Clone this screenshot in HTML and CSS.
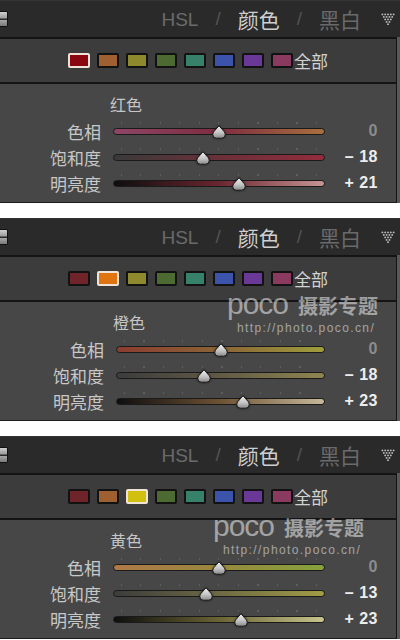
FILE: index.html
```html
<!DOCTYPE html>
<html lang="zh-CN">

<head>
    <meta charset="UTF-8">
    <meta name="viewport" content="width=device-width, initial-scale=1.0">
    <title>HSL / 颜色 / 黑白</title>
    <link rel="stylesheet" href="styles.css">
</head>

<body>
    <!-- shared shapes for the slider thumbs -->
    <svg class="svg-defs" aria-hidden="true">
        <defs>
            <linearGradient id="thumbFill" x1="0" y1="0" x2="0" y2="1">
                <stop offset="0" stop-color="#f2f2f2" />
                <stop offset="0.55" stop-color="#c4c4c4" />
                <stop offset="1" stop-color="#8a8a8a" />
            </linearGradient>
            <symbol id="thumbShape" viewBox="0 0 14 14">
                <path d="M7 0.8 L12 6.4 Q13.2 7.8 13.2 9.6 Q13.2 13.2 9.6 13.2 L4.4 13.2 Q0.8 13.2 0.8 9.6 Q0.8 7.8 2 6.4 Z"
                    fill="url(#thumbFill)" stroke="#1c1c1c" stroke-width="1" />
            </symbol>
            <symbol id="collapseIcon" viewBox="0 0 14 12">
                <g fill="#bdbdbd">
                    <circle cx="1.4" cy="1.4" r="0.95" /><circle cx="4.2" cy="1.4" r="0.95" /><circle cx="7" cy="1.4" r="0.95" /><circle cx="9.8" cy="1.4" r="0.95" /><circle cx="12.6" cy="1.4" r="0.95" />
                    <circle cx="2.8" cy="3.9" r="0.95" /><circle cx="5.6" cy="3.9" r="0.95" /><circle cx="8.4" cy="3.9" r="0.95" /><circle cx="11.2" cy="3.9" r="0.95" />
                    <circle cx="4.2" cy="6.4" r="0.95" /><circle cx="7" cy="6.4" r="0.95" /><circle cx="9.8" cy="6.4" r="0.95" />
                    <circle cx="5.6" cy="8.9" r="0.95" /><circle cx="8.4" cy="8.9" r="0.95" />
                    <circle cx="7" cy="11.2" r="0.95" />
                </g>
            </symbol>
        </defs>
    </svg>

    <!-- 红色 -->
    <div class="panel panel-red">
        <div class="panel-head">
            <span class="panel-toggle"></span>
            <div class="tabs">
                <span class="tab tab-latin">HSL</span>
                <span class="tab-sep">/</span>
                <span class="tab tab-active">颜色</span>
                <span class="tab-sep">/</span>
                <span class="tab">黑白</span>
                <svg class="collapse-icon"><use href="#collapseIcon" /></svg>
            </div>
        </div>
        <div class="swatches">
            <span class="swatch sw-red is-selected"></span>
            <span class="swatch sw-orange"></span>
            <span class="swatch sw-yellow"></span>
            <span class="swatch sw-green"></span>
            <span class="swatch sw-aqua"></span>
            <span class="swatch sw-blue"></span>
            <span class="swatch sw-purple"></span>
            <span class="swatch sw-magenta"></span>
            <span class="swatch-all">全部</span>
        </div>
        <div class="sliders">
            <div class="sliders-title">红色</div>
            <div class="slider-row">
                <span class="slider-label">色相</span>
                <div class="track-wrap">
                    <div class="track track-hue"></div>
                    <svg class="thumb" style="left: 50%"><use href="#thumbShape" /></svg>
                </div>
                <span class="slider-value is-zero">0</span>
            </div>
            <div class="slider-row">
                <span class="slider-label">饱和度</span>
                <div class="track-wrap">
                    <div class="track track-sat"></div>
                    <svg class="thumb" style="left: 42.5%"><use href="#thumbShape" /></svg>
                </div>
                <span class="slider-value">– 18</span>
            </div>
            <div class="slider-row">
                <span class="slider-label">明亮度</span>
                <div class="track-wrap">
                    <div class="track track-lum"></div>
                    <svg class="thumb" style="left: 59.5%"><use href="#thumbShape" /></svg>
                </div>
                <span class="slider-value">+ 21</span>
            </div>
        </div>
    </div>

    <!-- 橙色 -->
    <div class="panel panel-orange">
        <div class="panel-head">
            <span class="panel-toggle"></span>
            <div class="tabs">
                <span class="tab tab-latin">HSL</span>
                <span class="tab-sep">/</span>
                <span class="tab tab-active">颜色</span>
                <span class="tab-sep">/</span>
                <span class="tab">黑白</span>
                <svg class="collapse-icon"><use href="#collapseIcon" /></svg>
            </div>
        </div>
        <div class="swatches">
            <span class="swatch sw-red"></span>
            <span class="swatch sw-orange is-selected"></span>
            <span class="swatch sw-yellow"></span>
            <span class="swatch sw-green"></span>
            <span class="swatch sw-aqua"></span>
            <span class="swatch sw-blue"></span>
            <span class="swatch sw-purple"></span>
            <span class="swatch sw-magenta"></span>
            <span class="swatch-all">全部</span>
        </div>
        <div class="sliders">
            <div class="watermark">
                <div class="wm-head"><span class="wm-logo">poco</span><span class="wm-title">摄影专题</span></div>
                <div class="wm-url">http://photo.poco.cn/</div>
            </div>
            <div class="sliders-title">橙色</div>
            <div class="slider-row">
                <span class="slider-label">色相</span>
                <div class="track-wrap">
                    <div class="track track-hue"></div>
                    <svg class="thumb" style="left: 50%"><use href="#thumbShape" /></svg>
                </div>
                <span class="slider-value is-zero">0</span>
            </div>
            <div class="slider-row">
                <span class="slider-label">饱和度</span>
                <div class="track-wrap">
                    <div class="track track-sat"></div>
                    <svg class="thumb" style="left: 42%"><use href="#thumbShape" /></svg>
                </div>
                <span class="slider-value">– 18</span>
            </div>
            <div class="slider-row">
                <span class="slider-label">明亮度</span>
                <div class="track-wrap">
                    <div class="track track-lum"></div>
                    <svg class="thumb" style="left: 61%"><use href="#thumbShape" /></svg>
                </div>
                <span class="slider-value">+ 23</span>
            </div>
        </div>
    </div>

    <!-- 黄色 -->
    <div class="panel panel-yellow">
        <div class="panel-head">
            <span class="panel-toggle"></span>
            <div class="tabs">
                <span class="tab tab-latin">HSL</span>
                <span class="tab-sep">/</span>
                <span class="tab tab-active">颜色</span>
                <span class="tab-sep">/</span>
                <span class="tab">黑白</span>
                <svg class="collapse-icon"><use href="#collapseIcon" /></svg>
            </div>
        </div>
        <div class="swatches">
            <span class="swatch sw-red"></span>
            <span class="swatch sw-orange"></span>
            <span class="swatch sw-yellow is-selected"></span>
            <span class="swatch sw-green"></span>
            <span class="swatch sw-aqua"></span>
            <span class="swatch sw-blue"></span>
            <span class="swatch sw-purple"></span>
            <span class="swatch sw-magenta"></span>
            <span class="swatch-all">全部</span>
        </div>
        <div class="sliders">
            <div class="watermark">
                <div class="wm-head"><span class="wm-logo">poco</span><span class="wm-title">摄影专题</span></div>
                <div class="wm-url">http://photo.poco.cn/</div>
            </div>
            <div class="sliders-title">黄色</div>
            <div class="slider-row">
                <span class="slider-label">色相</span>
                <div class="track-wrap">
                    <div class="track track-hue"></div>
                    <svg class="thumb" style="left: 50%"><use href="#thumbShape" /></svg>
                </div>
                <span class="slider-value is-zero">0</span>
            </div>
            <div class="slider-row">
                <span class="slider-label">饱和度</span>
                <div class="track-wrap">
                    <div class="track track-sat"></div>
                    <svg class="thumb" style="left: 44%"><use href="#thumbShape" /></svg>
                </div>
                <span class="slider-value">– 13</span>
            </div>
            <div class="slider-row">
                <span class="slider-label">明亮度</span>
                <div class="track-wrap">
                    <div class="track track-lum"></div>
                    <svg class="thumb" style="left: 60.5%"><use href="#thumbShape" /></svg>
                </div>
                <span class="slider-value">+ 23</span>
            </div>
        </div>
    </div>
</body>

</html>
```

FILE: styles.css
```css
body {
    margin: 0;
    background-color: #fff;
    font-family: "Noto Sans CJK SC", "Liberation Sans", sans-serif;
}

.svg-defs {
    position: absolute;
    width: 0;
    height: 0;
}

.panel {
    width: 400px;
    background-color: #585858;
}

.panel + .panel {
    margin-top: 15px;
}

/* header with the tabs */
.panel-head {
    height: 37px;
    display: flex;
    align-items: center;
    background-color: #2a2a2a;
    border-top: 1px solid #343434;
    box-sizing: border-box;
}

.panel-toggle {
    width: 8px;
    height: 16px;
    box-sizing: border-box;
    border: 1px solid #111;
    border-left: none;
    border-radius: 0 2px 2px 0;
    background: linear-gradient(#d0d0d0, #9a9a9a 45%, #2a2a2a 48%, #2a2a2a 54%, #a8a8a8 57%, #7a7a7a);
}

.tabs {
    margin-left: auto;
    display: flex;
    align-items: center;
    gap: 17px;
    padding-right: 5px;
}

.tab {
    font-size: 21px;
    line-height: 1;
    color: #6a6a6a;
}

.tab-latin {
    font-family: "Liberation Sans", sans-serif;
    font-size: 19px;
}

.tab-active {
    color: #cfcfcf;
}

.tab-sep {
    font-family: "Liberation Sans", sans-serif;
    font-size: 19px;
    color: #545454;
}

.collapse-icon {
    width: 14px;
    height: 12px;
    margin-left: 3px;
}

/* colour picker row */
.swatches {
    height: 43px;
    margin-right: 3px;
    display: flex;
    align-items: center;
    justify-content: center;
    gap: 7px;
    background-color: #3c3c3c;
    border-top: 2px solid #141414;
    border-bottom: 2px solid #141414;
    border-right: 1px solid #141414;
}

.swatch {
    width: 22px;
    height: 15px;
    box-sizing: border-box;
    border: 2px solid #121212;
    border-radius: 2px;
}

.swatch.is-selected {
    border-color: #efe3d8;
}

.sw-red { background-color: #6e2428; }
.sw-orange { background-color: #9e6030; }
.sw-yellow { background-color: #8e892c; }
.sw-green { background-color: #4d6a33; }
.sw-aqua { background-color: #37806a; }
.sw-blue { background-color: #3c53ac; }
.sw-purple { background-color: #6a3998; }
.sw-magenta { background-color: #8a3a5e; }

.panel-red .sw-red { background-color: #8a0610; }
.panel-orange .sw-orange { background-color: #e07410; }
.panel-yellow .sw-yellow { background-color: #d2c010; }

.swatch-all {
    margin-left: -6px;
    font-size: 17px;
    color: #d2d2d2;
}

/* sliders */
.sliders {
    position: relative;
    height: 119px;
    margin-right: 3px;
    padding: 10px 18px 0 0;
    box-sizing: border-box;
    background-color: #474747;
    border-right: 1px solid #141414;
    border-bottom: 1px solid #1c1c1c;
}

.panel-orange .sliders {
    padding-left: 3px;
}

.sliders-title {
    padding-left: 110px;
    margin-bottom: 4px;
    font-size: 16px;
    line-height: 20px;
    color: #c6c6c6;
}

.slider-row {
    display: grid;
    grid-template-columns: 113px 1fr 53px;
    align-items: center;
    height: 26px;
}

.slider-label {
    padding-right: 12px;
    text-align: right;
    font-size: 17px;
    color: #c8c8c8;
}

.track-wrap {
    position: relative;
    height: 26px;
    display: flex;
    align-items: center;
}

.track-wrap::before {
    content: "";
    position: absolute;
    top: 4px;
    left: 8px;
    right: 6px;
    height: 2px;
    background: repeating-linear-gradient(to right, #5e5e5e 0 1px, transparent 1px 19.5px);
}

.track {
    width: 100%;
    height: 7px;
    box-sizing: border-box;
    border: 1px solid #1a1a1a;
    border-radius: 4px;
}

.thumb {
    position: absolute;
    top: 7px;
    width: 14px;
    height: 14px;
    transform: translateX(-50%);
    filter: drop-shadow(0 0 1px rgba(0, 0, 0, 0.6));
}

.slider-value {
    text-align: right;
    font-family: "Liberation Sans", sans-serif;
    font-weight: bold;
    font-size: 16px;
    letter-spacing: 0.5px;
    color: #ededed;
}

.slider-value.is-zero {
    color: #8c8c8c;
}

.panel-red .track-hue { background: linear-gradient(to right, #8e4566, #7e2c40 50%, #a8703e); }
.panel-red .track-sat { background: linear-gradient(to right, #3a3a3a, #6a3038 50%, #932c3e); }
.panel-red .track-lum { background: linear-gradient(to right, #0e0e0e, #6a2630 50%, #c89494); }

.panel-orange .track-hue { background: linear-gradient(to right, #8c3c30, #8a6436 50%, #9e9e3c); }
.panel-orange .track-sat { background: linear-gradient(to right, #3c3c3c, #625a46 50%, #8e8650); }
.panel-orange .track-lum { background: linear-gradient(to right, #0e0e0e, #6e5234 50%, #c6b89a); }

.panel-yellow .track-hue { background: linear-gradient(to right, #b07848, #98883e 50%, #86a23c); }
.panel-yellow .track-sat { background: linear-gradient(to right, #3c3c3c, #6e6a44 50%, #a29c46); }
.panel-yellow .track-lum { background: linear-gradient(to right, #0e0e0e, #6a6434 50%, #c8c48e); }

/* site watermark stamped over the picture */
.watermark {
    position: absolute;
    top: -11px;
    left: 227px;
    color: rgba(255, 255, 255, 0.5);
}

.panel-yellow .watermark {
    left: 213px;
    top: -7px;
}

.wm-head {
    display: flex;
    align-items: baseline;
    height: 26px;
    line-height: 26px;
}

.wm-logo {
    font-family: "Liberation Sans", sans-serif;
    font-size: 30px;
    letter-spacing: -1px;
}

.wm-title {
    margin-left: 10px;
    font-size: 20px;
    font-weight: bold;
}

.wm-url {
    margin: 5px 0 0 10px;
    font-family: "Liberation Sans", sans-serif;
    font-size: 12px;
    line-height: 12px;
    letter-spacing: 1.4px;
}
```
